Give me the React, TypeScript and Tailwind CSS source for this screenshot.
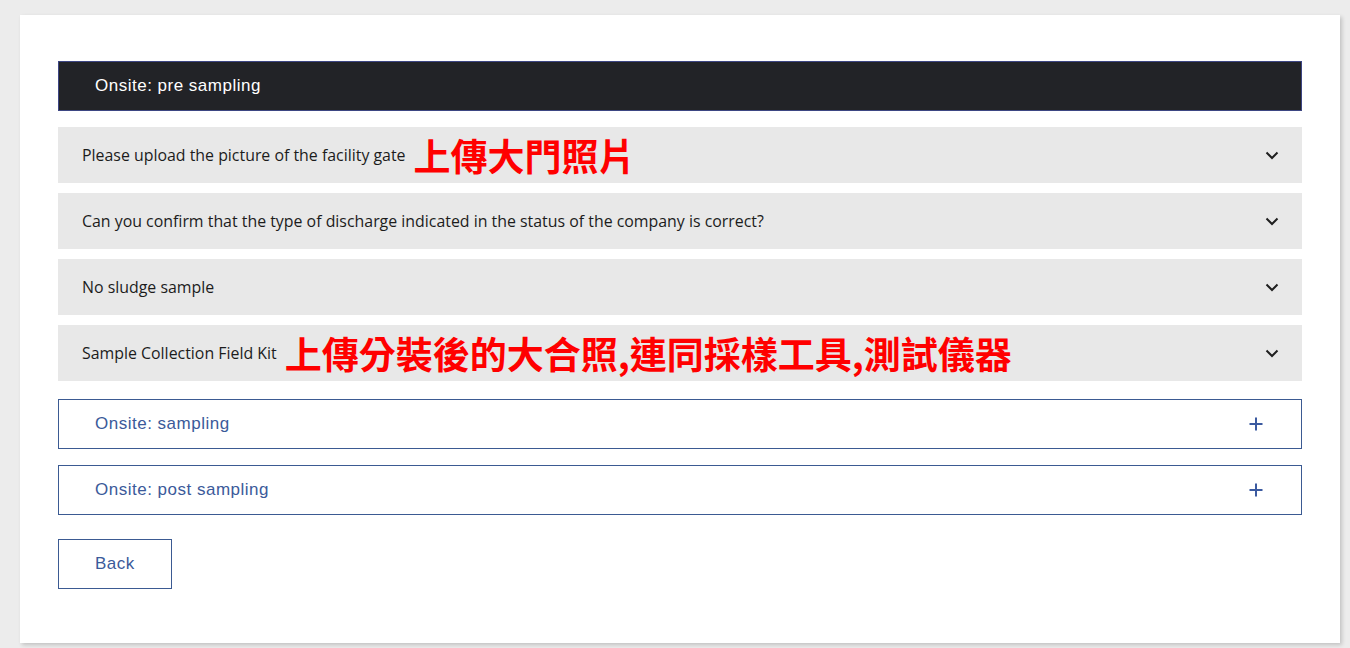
import { useState } from 'react'

const questions = [
  { label: 'Please upload the picture of the facility gate', note: '上傳大門照片' },
  { label: 'Can you confirm that the type of discharge indicated in the status of the company is correct?' },
  { label: 'No sludge sample' },
  { label: 'Sample Collection Field Kit', note: '上傳分裝後的大合照,連同採樣工具,測試儀器' },
]

function Chevron() {
  return (
    <svg width="14" height="14" viewBox="0 0 14 14" fill="none" className="shrink-0">
      <path d="M1.5 4.5 7 10 12.5 4.5" stroke="#1f1f1f" strokeWidth="2" />
    </svg>
  )
}

function Plus() {
  return (
    <svg width="14" height="14" viewBox="0 0 14 14" fill="none" className="shrink-0">
      <path d="M7 0.5v13M0.5 7h13" stroke="#3b5aa0" strokeWidth="2" />
    </svg>
  )
}

export default function App() {
  const [open, setOpen] = useState(-1)

  return (
    <div className="min-h-[648px] bg-[#ececec] pl-5 pr-[10px] pt-[15px] pb-[5px]">
      <div className="bg-white px-[38px] pt-[46px] pb-[54px] shadow-[2px_2px_4px_rgba(0,0,0,0.18)]">
        <div className="h-[50px] flex items-center px-[36px] bg-[#222327] border border-[#3d4683] font-['Liberation_Sans',sans-serif] text-white text-[17px] tracking-[0.5px]">
          Onsite: pre sampling
        </div>

        <div className="mt-[16px] flex flex-col gap-[10px]">
          {questions.map((q, i) => (
            <div
              key={i}
              onClick={() => setOpen(open === i ? -1 : i)}
              className="h-[56px] bg-[#e8e8e8] flex items-center justify-between pl-6 pr-[23px] cursor-pointer"
            >
              <div className="flex items-center">
                <span className="pt-[2px] font-['Open_Sans',sans-serif] text-[15.9px] text-[#1c1c1c]">{q.label}</span>
                {q.note && (
                  <span className="ml-2 font-['Noto_Sans_CJK_TC',sans-serif] font-bold text-[37px] leading-none text-[#ff0000]">
                    {q.note}
                  </span>
                )}
              </div>
              <Chevron />
            </div>
          ))}
        </div>

        <div className="mt-[18px] flex flex-col gap-4">
          {['Onsite: sampling', 'Onsite: post sampling'].map((t) => (
            <div
              key={t}
              className="h-[50px] border border-[#3b5a92] flex items-center justify-between pl-[36px] pr-[38px] font-['Liberation_Sans',sans-serif] text-[17px] tracking-[0.5px] text-[#3b5a9a]"
            >
              {t}
              <Plus />
            </div>
          ))}
        </div>

        <button className="mt-6 w-[114px] h-[50px] border border-[#3b5a92] text-left pl-[36px] font-['Liberation_Sans',sans-serif] text-[17px] tracking-[0.5px] text-[#3b5a9a]">
          Back
        </button>
      </div>
    </div>
  )
}
